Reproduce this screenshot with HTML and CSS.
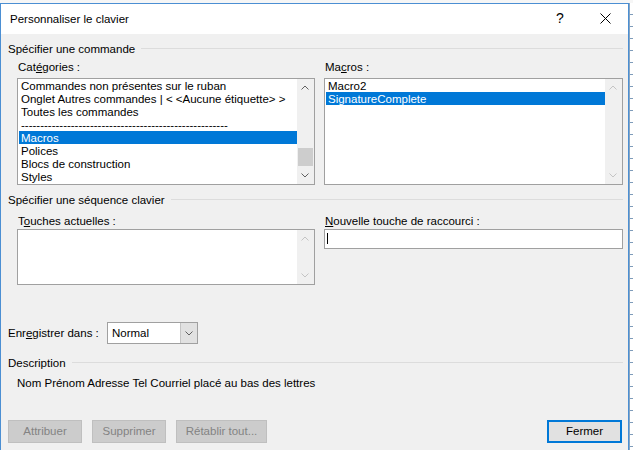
FILE: index.html
```html
<!DOCTYPE html>
<html>
    <head>
        <meta charset="utf-8">
        <title>Personnaliser le clavier</title>
        <link rel="stylesheet" href="styles.css">
    </head>
    <body>
        <div class="desk">
            <div class="desk-top"></div>
            <div class="desk-row">
                <div class="dialog">
                    <div class="titlebar">
                        <span class="title">Personnaliser le clavier</span>
                        <span class="tb-btn help">?</span>
                        <span class="tb-btn close">
                            <svg width="11" height="11" viewBox="0 0 11 11"><path d="M0.5 0.5 L10.5 10.5 M10.5 0.5 L0.5 10.5" stroke="#000" stroke-width="1" fill="none"/></svg>
                        </span>
                    </div>
                    <div class="content">
                        <div class="group">Spécifier une commande</div>
                        <div class="cols">
                            <div class="col">
                                <div class="label">Cat<u>é</u>gories :</div>
                                <div class="listbox tall">
                                    <ul class="items">
                                        <li>Commandes non présentes sur le ruban</li>
                                        <li>Onglet Autres commandes | &lt; &lt;Aucune étiquette&gt; &gt;</li>
                                        <li>Toutes les commandes</li>
                                        <li>------------------------------------------------------</li>
                                        <li class="sel">Macros</li>
                                        <li>Polices</li>
                                        <li>Blocs de construction</li>
                                        <li>Styles</li>
                                    </ul>
                                    <div class="scroll">
                                        <div class="arrow"><svg width="8" height="5" viewBox="0 0 8 5"><polyline points="0.5,4.5 4,1 7.5,4.5" fill="none" stroke="#606060"/></svg></div>
                                        <div class="track"><div class="thumb"></div></div>
                                        <div class="arrow"><svg width="8" height="5" viewBox="0 0 8 5"><polyline points="0.5,0.5 4,4 7.5,0.5" fill="none" stroke="#606060"/></svg></div>
                                    </div>
                                </div>
                            </div>
                            <div class="col">
                                <div class="label">Ma<u>c</u>ros :</div>
                                <div class="listbox tall">
                                    <ul class="items">
                                        <li>Macro2</li>
                                        <li class="sel">SignatureComplete</li>
                                    </ul>
                                    <div class="scroll">
                                        <div class="arrow"><svg width="8" height="5" viewBox="0 0 8 5"><polyline points="0.5,4.5 4,1 7.5,4.5" fill="none" stroke="#c4c4c4"/></svg></div>
                                        <div class="track"></div>
                                        <div class="arrow"><svg width="8" height="5" viewBox="0 0 8 5"><polyline points="0.5,0.5 4,4 7.5,0.5" fill="none" stroke="#c4c4c4"/></svg></div>
                                    </div>
                                </div>
                            </div>
                        </div>

                        <div class="group group-2">Spécifier une séquence clavier</div>
                        <div class="cols">
                            <div class="col">
                                <div class="label label-2">T<u>o</u>uches actuelles :</div>
                                <div class="listbox short">
                                    <ul class="items"></ul>
                                    <div class="scroll">
                                        <div class="arrow"><svg width="8" height="5" viewBox="0 0 8 5"><polyline points="0.5,4.5 4,1 7.5,4.5" fill="none" stroke="#c4c4c4"/></svg></div>
                                        <div class="track"></div>
                                        <div class="arrow"><svg width="8" height="5" viewBox="0 0 8 5"><polyline points="0.5,0.5 4,4 7.5,0.5" fill="none" stroke="#c4c4c4"/></svg></div>
                                    </div>
                                </div>
                            </div>
                            <div class="col">
                                <div class="label label-2"><u>N</u>ouvelle touche de raccourci :</div>
                                <div class="textbox"><span class="caret"></span></div>
                            </div>
                        </div>

                        <div class="save-row">
                            <span class="save-label">Enr<u>e</u>gistrer dans :</span>
                            <div class="combo">
                                <span class="combo-val">Normal</span>
                                <span class="combo-btn"><svg width="8" height="5" viewBox="0 0 8 5"><polyline points="0.5,0.5 4,4 7.5,0.5" fill="none" stroke="#606060"/></svg></span>
                            </div>
                        </div>

                        <div class="group group-3">Description</div>
                        <div class="desc">Nom Prénom Adresse Tel Courriel placé au bas des lettres</div>

                        <div class="buttons">
                            <div class="btn-group">
                                <button class="button disabled w-74">Attribuer</button>
                                <button class="button disabled w-74">Supprimer</button>
                                <button class="button disabled w-91">Rétablir tout...</button>
                            </div>
                            <button class="button default w-75">Fermer</button>
                        </div>
                    </div>
                </div>
                <div class="desk-side"></div>
            </div>
        </div>
    </body>
</html>
```

FILE: styles.css
```css
*{
    padding: 0;
    margin: 0;
    box-sizing: border-box;
}
html { font-family: "Segoe UI", "Liberation Sans", Arial, sans-serif; font-size: 11.5px; color: #000; }
body { width: 633px; height: 450px; overflow: hidden; background: #fff; }

.desk { width: 633px; height: 450px; overflow: hidden; }
.desk-top {
    height: 3px;
    background: #f6f6f6;
}
.desk-row { display: flex; height: 447px; }
.desk-side {
    flex: 1;
    border-left: 1px solid #8aa6c2;
    background: repeating-linear-gradient(to bottom, #fff 0, #fff 11px, #7f9cba 11px, #7f9cba 12px);
}

.dialog {
    width: 629px;
    flex: none;
    display: flex;
    flex-direction: column;
    border: 1px solid #4b8fd3;
    border-bottom: none;
}
.titlebar {
    height: 30px;
    background: #fff;
    display: flex;
    align-items: center;
}
.title { flex: 1; padding-left: 9px; }
.tb-btn {
    width: 46px;
    height: 30px;
    display: flex;
    align-items: center;
    justify-content: center;
}
.help { font-size: 14px; padding-left: 2px; padding-bottom: 2px; }
.close svg { margin-bottom: 1px; }

.content {
    flex: 1;
    background: #f0f0f0;
    padding: 7px 5px 0 7px;
}

.group {
    display: flex;
    align-items: center;
    height: 16px;
    line-height: 16px;
    white-space: nowrap;
}
.group::after {
    content: "";
    flex: 1;
    height: 1px;
    background: #dcdcdc;
    margin-left: 6px;
    margin-bottom: 2px;
}
.group-2 { margin-top: 7px; }
.group-3 { margin-top: 11px; }

.cols {
    display: grid;
    grid-template-columns: 298px 299px;
    column-gap: 9px;
    margin-left: 9px;
}
.label {
    height: 16px;
    line-height: 16px;
    padding-left: 1px;
    margin-top: 2px;
    margin-bottom: 3px;
}
.label-2 { margin-top: 5px; margin-bottom: 0; }

.listbox {
    display: flex;
    border: 1px solid #a0a0a0;
    background: #fff;
}
.tall { height: 107px; }
.short { height: 56px; }
.items { flex: 1; list-style: none; overflow: hidden; }
.items li {
    height: 13px;
    line-height: 12px;
    padding: 1px 0 0 2px;
    margin-left: 1px;
    white-space: nowrap;
}
.items li.sel { background: #0078d7; color: #fff; }

.scroll {
    width: 17px;
    display: flex;
    flex-direction: column;
    background: #f0f0f0;
}
.arrow {
    height: 17px;
    display: flex;
    align-items: center;
    justify-content: center;
    padding-right: 1px;
}
.track { flex: 1; display: flex; flex-direction: column; justify-content: flex-end; }
.thumb { height: 18px; margin: 0 1px 1px 1px; background: #cdcdcd; }

.textbox {
    height: 20px;
    border: 1px solid #a0a0a0;
    background: #fff;
    padding: 3px 0 0 2px;
}
.caret { display: block; width: 1px; height: 11px; background: #000; }

.save-row {
    display: flex;
    align-items: center;
    height: 22px;
    margin-top: 37px;
}
.save-label { width: 99px; line-height: 22px; }
.combo {
    width: 91px;
    height: 22px;
    display: flex;
    border: 1px solid #a0a0a0;
    background: #fff;
}
.combo-val { flex: 1; padding-left: 4px; line-height: 20px; }
.combo-btn {
    width: 17px;
    display: flex;
    align-items: center;
    justify-content: center;
    background: #e1e1e1;
    border-left: 1px solid #c4c4c4;
}

.desc {
    height: 16px;
    line-height: 16px;
    margin-top: 4px;
    padding-left: 9px;
}

.buttons {
    display: flex;
    justify-content: space-between;
    margin-top: 29px;
    margin-right: 1px;
}
.btn-group { display: flex; gap: 10px; }
.button {
    height: 23px;
    font: inherit;
    line-height: 21px;
    border: 1px solid #adadad;
    background: #e1e1e1;
    color: #000;
    text-align: center;
}
.button.disabled { background: #cccccc; border-color: #bfbfbf; color: #838383; }
.button.default { border: 2px solid #0078d7; line-height: 19px; }
.w-74 { width: 74px; }
.w-75 { width: 75px; }
.w-91 { width: 91px; }
```
